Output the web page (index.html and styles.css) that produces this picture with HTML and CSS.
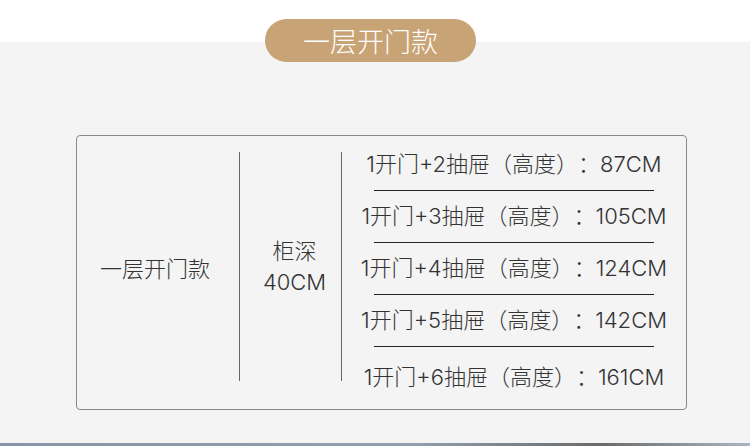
FILE: index.html
```html
<!DOCTYPE html>
<html lang="zh">
<head>
<meta charset="utf-8">
<link rel="stylesheet" href="styles.css">
</head>
<body>
<div class="page">
  <header class="header">
    <div class="pill">一层开门款</div>
  </header>
  <section class="spec">
    <div class="col col-name">一层开门款</div>
    <div class="col col-depth">柜深<br>40CM</div>
    <div class="col-rows">
      <div class="row">1开门+2抽屉（高度）：87CM</div>
      <div class="row">1开门+3抽屉（高度）：105CM</div>
      <div class="row">1开门+4抽屉（高度）：124CM</div>
      <div class="row">1开门+5抽屉（高度）：142CM</div>
      <div class="row row-last">1开门+6抽屉（高度）：161CM</div>
    </div>
  </section>
  <div class="photo-edge"></div>
</div>
</body>
</html>
```

FILE: styles.css
```css
html, body {
  margin: 0;
  padding: 0;
  width: 750px;
  height: 446px;
  overflow: hidden;
  background: #f4f4f4;
}

.page {
  font-family: "Inter", "Noto Sans CJK SC", sans-serif;
  font-weight: 300;
  color: #333;
  display: flex;
  flex-direction: column;
  text-spacing-trim: space-all;
}

.header {
  height: 80px;
  background: linear-gradient(to bottom, #ffffff 0, #ffffff 42px, #f4f4f4 42px);
  display: flex;
  align-items: flex-start;
}

.pill {
  margin-top: 19px;
  margin-left: 265px;
  width: 211px;
  height: 43px;
  border-radius: 22px;
  background: #c8a375;
  color: #fff;
  font-family: "Noto Sans CJK SC", sans-serif;
  font-weight: 300;
  font-size: 27px;
  line-height: 43px;
  text-align: center;
}

.spec {
  margin: 55px 0 0 76px;
  width: 609px;
  height: 273px;
  border: 1px solid #8a8a8a;
  border-radius: 4px;
  display: grid;
  grid-template-columns: 163px 102px 1fr;
  align-items: start;
}

.col {
  margin-top: 16px;
  height: 229px;
  border-right: 1px solid #666;
  display: flex;
  align-items: center;
  justify-content: center;
  text-align: center;
  font-size: 22px;
}

.col-name {
  font-family: "Noto Sans CJK SC", sans-serif;
  padding-right: 6px;
  box-sizing: border-box;
}

.col-depth {
  line-height: 31px;
  padding-left: 8px;
  box-sizing: border-box;
}

.col-rows {
  margin-top: 3px;
  display: flex;
  flex-direction: column;
  align-items: center;
}

.row {
  width: 330px;
  height: 51px;
  line-height: 51px;
  text-align: center;
  font-size: 22px;
  white-space: nowrap;
  position: relative;
}

.row::after {
  content: "";
  position: absolute;
  left: 25px;
  right: 25px;
  bottom: -1px;
  height: 1px;
  background: #222;
}

.row + .row {
  margin-top: 1px;
}

.row-last {
  height: 60px;
  line-height: 60px;
}

.row-last::after {
  display: none;
}

.photo-edge {
  margin-top: 33px;
  height: 3px;
  background: linear-gradient(to right, #8796a6 0, #90a0ae 55%, #6a6a6a 80%, #a9b6c2 100%);
}
```
